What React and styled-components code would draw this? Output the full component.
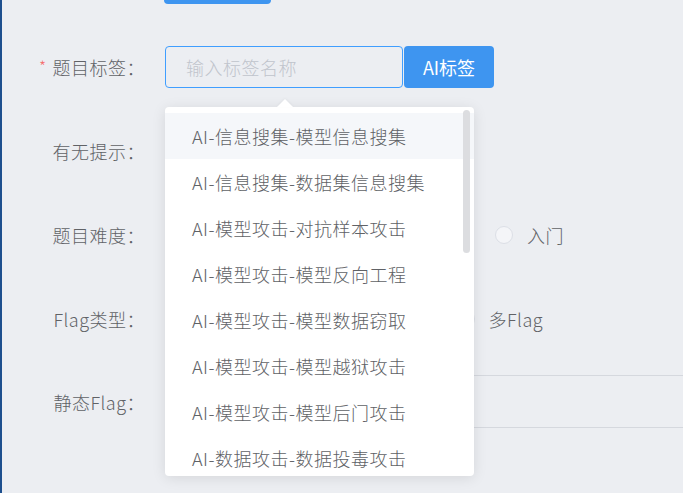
import React from "react";
import styled, { createGlobalStyle } from "styled-components";

const GlobalStyle = createGlobalStyle`
  html, body {
    margin: 0;
    padding: 0;
    background: #eceef2;
  }
  body {
    font-family: "Noto Sans CJK SC", "Noto Sans", sans-serif;
    font-weight: 300;
    letter-spacing: 0.5px;
  }
`;

const tags = [
  "AI-信息搜集-模型信息搜集",
  "AI-信息搜集-数据集信息搜集",
  "AI-模型攻击-对抗样本攻击",
  "AI-模型攻击-模型反向工程",
  "AI-模型攻击-模型数据窃取",
  "AI-模型攻击-模型越狱攻击",
  "AI-模型攻击-模型后门攻击",
  "AI-数据攻击-数据投毒攻击",
];

function App() {
  return (
    <Page>
      <GlobalStyle />
      <Form>
        <StubRow>
          <span />
          <StubButton />
        </StubRow>

        <FormItem $top={42}>
          <Label>
            <Star>*</Star>题目标签：
          </Label>
          <Field>
            <TagInput placeholder="输入标签名称" />
            <Button>AI标签</Button>
            <Suggestions>
              <Arrow />
              <List>
                {tags.map((t, i) => (
                  <Item key={t} $active={i === 0}>
                    {t}
                  </Item>
                ))}
              </List>
              <Thumb />
            </Suggestions>
          </Field>
        </FormItem>

        <FormItem $top={42}>
          <Label>有无提示：</Label>
          <Field>
            <RadioGroup $gap={44}>
              <Radio label="有" />
              <Radio label="无" />
            </RadioGroup>
          </Field>
        </FormItem>

        <FormItem $top={42}>
          <Label>题目难度：</Label>
          <Field>
            <RadioGroup $gap={41}>
              <Radio label="困难" />
              <Radio label="中等" />
              <Radio label="简单" />
              <Radio label="入门" />
            </RadioGroup>
          </Field>
        </FormItem>

        <FormItem $top={42}>
          <Label>Flag类型：</Label>
          <Field>
            <RadioGroup $gap={50}>
              <Radio label="单Flag" />
              <Radio label="动态Flag" />
              <Radio label="多Flag" />
            </RadioGroup>
          </Field>
        </FormItem>

        <FormItem $top={35} $h={53}>
          <Label>静态Flag：</Label>
          <Field>
            <FlagInput />
          </Field>
        </FormItem>
      </Form>
    </Page>
  );
}

function Radio({ label }) {
  return (
    <RadioOption>
      <Circle />
      {label}
    </RadioOption>
  );
}

const Page = styled.div`
  width: 683px;
  height: 493px;
  box-sizing: border-box;
  border-left: 2px solid #1d4f8e;
  overflow: hidden;
  color: #606266;
`;

const Form = styled.div`
  display: flex;
  flex-direction: column;
`;

const StubRow = styled.div`
  display: grid;
  grid-template-columns: 143px 1fr;
  column-gap: 19px;
  height: 4px;
`;

const StubButton = styled.div`
  width: 107px;
  height: 4px;
  background: #3e95f0;
  border-radius: 0 0 4px 4px;
`;

const FormItem = styled.div`
  display: grid;
  grid-template-columns: 143px 1fr;
  column-gap: 20px;
  align-items: center;
  margin-top: ${(p) => p.$top}px;
  height: ${(p) => p.$h || 42}px;
`;

const Label = styled.div`
  text-align: right;
  font-size: 18px;
  color: #606266;
  white-space: nowrap;
`;

const Star = styled.span`
  color: #f56c6c;
  font-size: 16px;
  margin-right: 6px;
  vertical-align: 2px;
`;

const Field = styled.div`
  position: relative;
  display: flex;
  align-items: center;
  height: 100%;
`;

const TagInput = styled.input`
  width: 238px;
  height: 42px;
  box-sizing: border-box;
  border: 1px solid #409eff;
  border-radius: 4px;
  background: transparent;
  padding: 0 20px;
  font-family: inherit;
  font-weight: 300;
  font-size: 18px;
  letter-spacing: 0.5px;
  color: #606266;
  outline: none;
  &::placeholder {
    color: #c0c4cc;
  }
`;

const Button = styled.button`
  width: 90px;
  height: 42px;
  margin-left: 1px;
  border: none;
  border-radius: 4px;
  background: #3e95f0;
  color: #fff;
  font-family: inherit;
  font-weight: 400;
  font-size: 18px;
  letter-spacing: 0;
`;

const Suggestions = styled.div`
  position: absolute;
  z-index: 10;
  top: 61px;
  left: 0;
  width: 309px;
  height: 369px;
  background: #fff;
  border-radius: 4px;
  box-shadow: 0 2px 14px rgba(0, 0, 0, 0.1);
`;

const Arrow = styled.div`
  position: absolute;
  top: -8px;
  left: 112px;
  width: 0;
  height: 0;
  border-left: 8px solid transparent;
  border-right: 8px solid transparent;
  border-bottom: 8px solid #fff;
  filter: drop-shadow(0 -1px 1px rgba(0, 0, 0, 0.04));
`;

const List = styled.ul`
  list-style: none;
  margin: 0;
  padding: 6px 0 0;
  height: 100%;
  box-sizing: border-box;
  overflow: hidden;
  border-radius: 4px;
`;

const Item = styled.li`
  height: 46px;
  line-height: 46px;
  padding-left: 27px;
  font-size: 18px;
  color: #606266;
  white-space: nowrap;
  background: ${(p) => (p.$active ? "#f5f7fa" : "transparent")};
`;

const Thumb = styled.div`
  position: absolute;
  top: 3px;
  right: 4px;
  width: 7px;
  height: 143px;
  border-radius: 4px;
  background: #dcdde0;
`;

const RadioGroup = styled.div`
  display: flex;
  align-items: center;
  gap: ${(p) => p.$gap}px;
`;

const RadioOption = styled.label`
  display: flex;
  align-items: center;
  gap: 14px;
  font-size: 18px;
  color: #606266;
  white-space: nowrap;
`;

const Circle = styled.span`
  width: 18px;
  height: 18px;
  box-sizing: border-box;
  border: 1px solid #dcdfe6;
  border-radius: 50%;
  background: #f4f5f8;
`;

const FlagInput = styled.div`
  width: 620px;
  height: 53px;
  box-sizing: border-box;
  border: 1px solid #d5d8de;
  border-radius: 4px;
`;

export default App;
